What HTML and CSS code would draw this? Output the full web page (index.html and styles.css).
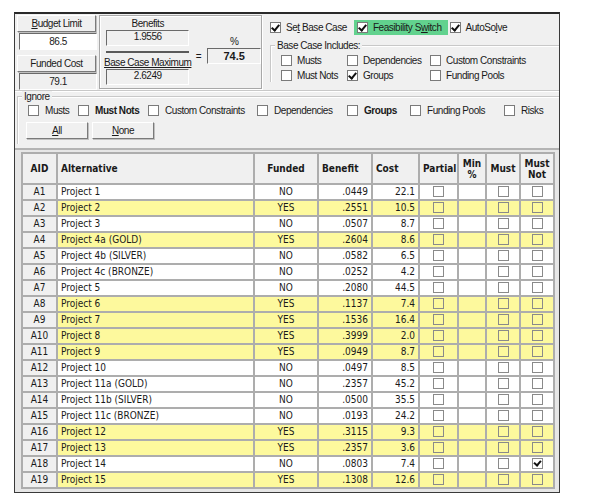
FILE: index.html
```html
<!DOCTYPE html>
<html lang="en">
<head>
  <meta charset="UTF-8" />
  <title>Portfolio Optimizer</title>
  <link rel="stylesheet" href="styles.css">
</head>
<body>
  <div class="window">
    <div class="top">
      <div class="budget">
        <div class="btn"><u>B</u>udget Limit</div>
        <div class="field white">86.5</div>
        <div class="btn">Funded Cost</div>
        <div class="field">79.1</div>
      </div>

      <div class="ratio">
        <div class="ratio-left">
          <div class="lbl">Benefits</div>
          <div class="field small">1.9556</div>
          <div class="bar"></div>
          <div class="lbl uline">Base Case Maximum</div>
          <div class="field small">2.6249</div>
        </div>
        <div class="eq">=</div>
        <div class="pct">
          <div class="lbl">%</div>
          <div class="field pct-val">74.5</div>
        </div>
      </div>

      <div class="options">
        <div class="opt-row">
          <label class="chk"><span class="box on"></span><span>Se<u>t</u> Base Case</span></label>
          <label class="chk green"><span class="box on"></span><span>Feasibility S<u>w</u>itch</span></label>
          <label class="chk"><span class="box on"></span><span>AutoSo<u>l</u>ve</span></label>
        </div>
        <div class="group includes">
          <div class="legend">Base Case Includes:</div>
          <div class="inc-grid">
            <label class="chk"><span class="box"></span>Musts</label>
            <label class="chk"><span class="box"></span>Dependencies</label>
            <label class="chk"><span class="box"></span>Custom Constraints</label>
            <label class="chk"><span class="box"></span>Must Nots</label>
            <label class="chk"><span class="box on"></span>Groups</label>
            <label class="chk"><span class="box"></span>Funding Pools</label>
          </div>
        </div>
      </div>
    </div>

    <div class="group ignore">
      <div class="legend">Ignore</div>
      <div class="ign-row">
        <label class="chk w-musts"><span class="box"></span>Musts</label>
        <label class="chk w-mustnots"><span class="box"></span><b>Must Nots</b></label>
        <label class="chk w-custom"><span class="box"></span>Custom Constraints</label>
        <label class="chk w-dep"><span class="box"></span>Dependencies</label>
        <label class="chk w-groups"><span class="box"></span><b>Groups</b></label>
        <label class="chk w-pools"><span class="box"></span>Funding Pools</label>
        <label class="chk"><span class="box"></span>Risks</label>
      </div>
      <div class="ign-btns">
        <div class="btn"><u>A</u>ll</div>
        <div class="btn"><u>N</u>one</div>
      </div>
    </div>

    <div class="grid-wrap">
      <table class="grid">
        <colgroup>
          <col class="c-aid"><col class="c-alt"><col class="c-fund"><col class="c-ben">
          <col class="c-cost"><col class="c-part"><col class="c-min"><col class="c-must"><col class="c-mn">
        </colgroup>
        <thead>
          <tr>
            <th>AID</th>
            <th class="left">Alternative</th>
            <th>Funded</th>
            <th class="left">Benefit</th>
            <th class="left">Cost</th>
            <th>Partial</th>
            <th>Min<br>%</th>
            <th>Must</th>
            <th>Must<br>Not</th>
          </tr>
        </thead>
        <tbody id="rows"></tbody>
      </table>
    </div>
  </div>

  <script>
    const data = [
      ["A1", "Project 1", "NO", ".0449", "22.1"],
      ["A2", "Project 2", "YES", ".2551", "10.5"],
      ["A3", "Project 3", "NO", ".0507", "8.7"],
      ["A4", "Project 4a (GOLD)", "YES", ".2604", "8.6"],
      ["A5", "Project 4b (SILVER)", "NO", ".0582", "6.5"],
      ["A6", "Project 4c (BRONZE)", "NO", ".0252", "4.2"],
      ["A7", "Project 5", "NO", ".2080", "44.5"],
      ["A8", "Project 6", "YES", ".1137", "7.4"],
      ["A9", "Project 7", "YES", ".1536", "16.4"],
      ["A10", "Project 8", "YES", ".3999", "2.0"],
      ["A11", "Project 9", "YES", ".0949", "8.7"],
      ["A12", "Project 10", "NO", ".0497", "8.5"],
      ["A13", "Project 11a (GOLD)", "NO", ".2357", "45.2"],
      ["A14", "Project 11b (SILVER)", "NO", ".0500", "35.5"],
      ["A15", "Project 11c (BRONZE)", "NO", ".0193", "24.2"],
      ["A16", "Project 12", "YES", ".3115", "9.3"],
      ["A17", "Project 13", "YES", ".2357", "3.6"],
      ["A18", "Project 14", "NO", ".0803", "7.4", true],
      ["A19", "Project 15", "YES", ".1308", "12.6"]
    ];

    let html = "";
    for (const [aid, name, funded, benefit, cost, mustNot] of data) {
      const cls = funded === "YES" ? "funded" : "";
      html += `<tr class="${cls}">
        <td class="aid">${aid}</td>
        <td class="name">${name}</td>
        <td class="center">${funded}</td>
        <td class="num">${benefit}</td>
        <td class="num">${cost}</td>
        <td class="center"><span class="cb"></span></td>
        <td></td>
        <td class="center"><span class="cb"></span></td>
        <td class="center"><span class="cb${mustNot ? " on" : ""}"></span></td>
      </tr>`;
    }
    document.getElementById("rows").innerHTML = html;
  </script>
</body>
</html>
```

FILE: styles.css
```css
body {
  margin: 12px 0 0 14px;
  background: #ffffff;
  font-family: 'Liberation Sans', Arial, sans-serif;
  font-size: 10px;
  letter-spacing: -0.45px;
  color: #1a1a1a;
}
.window {
  width: 544px;
  height: 478px;
  border: 1px solid #3a3a3a;
  border-top: 2px solid #2a2a2a;
  background: #f0f0f0;
  overflow: hidden;
}
.top {
  display: flex;
  height: 76px;
  border-bottom: 1px solid #c8c8c8;
  box-shadow: 0 1px 0 #ffffff;
}

/* budget column */
.budget {
  width: 80px;
  padding: 1px 0 0 2px;
}
.btn {
  height: 15px;
  line-height: 15px;
  text-align: center;
  background: #f0f0f0;
  border: 1px solid #ffffff;
  border-right-color: #7a7a7a;
  border-bottom-color: #7a7a7a;
  box-shadow: 1px 1px 0 #c0c0c0;
}
.budget .btn {
  margin-right: 1px;
}
.budget .btn + .field + .btn {
  margin-top: 5px;
}
.field {
  height: 15px;
  line-height: 15px;
  text-align: center;
  border: 1px solid #a0a0a0;
  border-top-color: #6a6a6a;
  border-left-color: #6a6a6a;
  border-right-color: #ffffff;
  border-bottom-color: #ffffff;
  margin: 1px 0 0 2px;
}
.field.white {
  background: #ffffff;
}

/* ratio box */
.ratio {
  display: flex;
  width: 161px;
  height: 72px;
  margin: 1px 0 0 2px;
  border: 1px solid #a8a8a8;
  box-shadow: inset 1px 1px 0 #ffffff, 1px 1px 0 #ffffff;
}
.ratio-left {
  width: 84px;
  padding: 2px 0 0 6px;
}
.lbl {
  text-align: center;
  height: 11px;
  line-height: 11px;
  white-space: nowrap;
}
.uline {
  text-decoration: underline;
  margin: 0 -4px;
}
.field.small {
  margin: 1px 0 0 0;
  height: 14px;
  line-height: 12px;
}
.bar {
  height: 2px;
  background: #5a5a5a;
  margin: 5px 0 4px;
}
.eq {
  width: 18px;
  padding-top: 35px;
  text-align: center;
}
.pct {
  width: 54px;
  padding-top: 20px;
}
.field.pct-val {
  margin: 1px 0 0;
  font-weight: bold;
  font-size: 11px;
  letter-spacing: 0;
  height: 14px;
  line-height: 14px;
}

/* options */
.options {
  flex: 1;
  padding: 5px 0 0 8px;
}
.opt-row {
  display: flex;
  align-items: center;
  height: 17px;
}
.chk {
  display: inline-flex;
  align-items: center;
  white-space: nowrap;
}
.box {
  width: 9px;
  height: 9px;
  border: 1px solid #7a7a7a;
  background: #ffffff;
  margin-right: 5px;
  position: relative;
  flex: none;
}
.box.on::after {
  content: "";
  position: absolute;
  left: 2px;
  top: 0px;
  width: 3px;
  height: 6px;
  border-right: 2px solid #111;
  border-bottom: 2px solid #111;
  transform: rotate(40deg);
}
.opt-row .chk {
  margin-right: 9px;
}
.opt-row .green {
  background: #62d28e;
  padding: 2px 6px 2px 3px;
  margin-left: -2px;
  margin-right: 2px;
}
.group {
  border: 1px solid #c8c8c8;
  box-shadow: inset 1px 1px 0 #ffffff;
  position: relative;
}
.legend {
  position: absolute;
  top: -6px;
  left: 4px;
  padding: 0 2px;
  background: #f0f0f0;
  line-height: 11px;
}
.includes {
  margin-top: 9px;
  height: 36px;
  border-right: none;
  border-bottom: none;
}
.inc-grid {
  display: grid;
  grid-template-columns: 66px 83px 120px;
  row-gap: 4px;
  padding: 9px 0 0 10px;
}
.inc-grid .box {
  margin-right: 5px;
}

/* ignore group */
.ignore {
  margin: 5px 0 0 2px;
  height: 47px;
  border-right: none;
  border-bottom: none;
}
.ign-row {
  display: flex;
  padding: 8px 0 0 10px;
  height: 11px;
}
.ign-row .box {
  margin-right: 6px;
}
.w-musts { width: 50px; }
.w-mustnots { width: 70px; }
.w-custom { width: 109px; }
.w-dep { width: 90px; }
.w-groups { width: 63px; }
.w-pools { width: 94px; }
.ign-btns {
  display: flex;
  gap: 4px;
  padding: 6px 0 0 8px;
}
.ign-btns .btn {
  width: 60px;
  height: 15px;
}

/* table */
.grid-wrap {
  margin-top: 4px;
  border-top: 2px solid #b4b4b4;
  background: #e6e6e6;
  height: 400px;
  padding: 2px 0 0 6px;
}
.grid {
  border-collapse: collapse;
  table-layout: fixed;
  width: 532px;
  font-family: 'DejaVu Sans Condensed', 'DejaVu Sans', sans-serif;
  font-size: 10px;
  letter-spacing: 0;
  background: #ffffff;
}
.c-aid { width: 35px; }
.c-alt { width: 197px; }
.c-fund { width: 64px; }
.c-ben { width: 54px; }
.c-cost { width: 47px; }
.c-part { width: 39px; }
.c-min { width: 28px; }
.c-must { width: 34px; }
.c-mn { width: 34px; }
.grid th, .grid td {
  border: 2px solid #adadad;
  padding: 0 3px;
  white-space: nowrap;
  overflow: hidden;
}
.grid th {
  height: 29px;
  background: #f0f0f0;
  font-weight: bold;
  line-height: 11px;
  text-align: center;
}
.grid th.left {
  text-align: left;
}
.grid td {
  height: 14px;
  line-height: 14px;
}
.grid td.aid {
  background: #f0f0f0;
  text-align: center;
}
.grid tr.funded td {
  background: #fdf99d;
}
.grid tr.funded td.aid {
  background: #f0f0f0;
}
.center { text-align: center; }
.num { text-align: right; }
.cb {
  display: inline-block;
  width: 9px;
  height: 9px;
  border: 1px solid #8a8a8a;
  vertical-align: middle;
  position: relative;
  margin-top: -2px;
}
.cb.on::after {
  content: "";
  position: absolute;
  left: 2px;
  top: 0;
  width: 3px;
  height: 5px;
  border-right: 2px solid #111;
  border-bottom: 2px solid #111;
  transform: rotate(40deg);
}
```
